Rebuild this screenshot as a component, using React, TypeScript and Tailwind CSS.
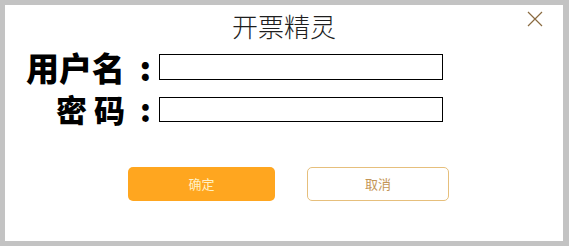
import React from "react";

const cjk = { fontFamily: '"Noto Sans CJK SC", "Noto Sans", sans-serif' };

export default function App() {
  return (
    <div className="w-[569px] h-[246px] bg-[#c3c3c3] pt-[5px] pl-[5px] pr-[6px] pb-[5px]" style={cjk}>
      <div className="relative w-full h-full bg-white">
        <h1 className="pt-[4px] h-[44px] text-center text-[26px] leading-[34px] font-light text-[#1e1e1e]">
          开票精灵
        </h1>
        <button className="absolute left-[522px] top-[6px] w-[16px] h-[16px] text-[#8a6a40]">
          <svg viewBox="0 0 16 16" className="w-[16px] h-[16px]" fill="none" stroke="currentColor" strokeWidth="1.2">
            <path d="M1 1L15 15M15 1L1 15" />
          </svg>
        </button>

        <div className="mt-[4px] flex items-center">
          <span className="w-[150px] text-right text-[33px] leading-[28px] font-black text-black">
            用户名<span className="inline-block w-[30px] text-right pr-[4px]">:</span>
          </span>
          <input className="ml-[4px] w-[284px] h-[26px] border-[1.5px] border-black outline-none" />
        </div>

        <div className="mt-[14px] flex items-center">
          <span className="w-[150px] text-right text-[31px] leading-[28px] font-black text-black">
            密 码<span className="inline-block w-[30px] text-right pr-[4px]">:</span>
          </span>
          <input type="password" className="ml-[4px] w-[284px] h-[25px] border-[1.5px] border-black outline-none" />
        </div>

        <div className="mt-[44px] ml-[123px] flex gap-[32px]">
          <button className="w-[147px] h-[34px] rounded-[5px] bg-[#ffa61f] text-[13px] text-[#fff1c4]">
            确定
          </button>
          <button className="w-[142px] h-[34px] rounded-[5px] border border-[#e6bf7c] bg-white text-[13px] text-[#c49556]">
            取消
          </button>
        </div>
      </div>
    </div>
  );
}
